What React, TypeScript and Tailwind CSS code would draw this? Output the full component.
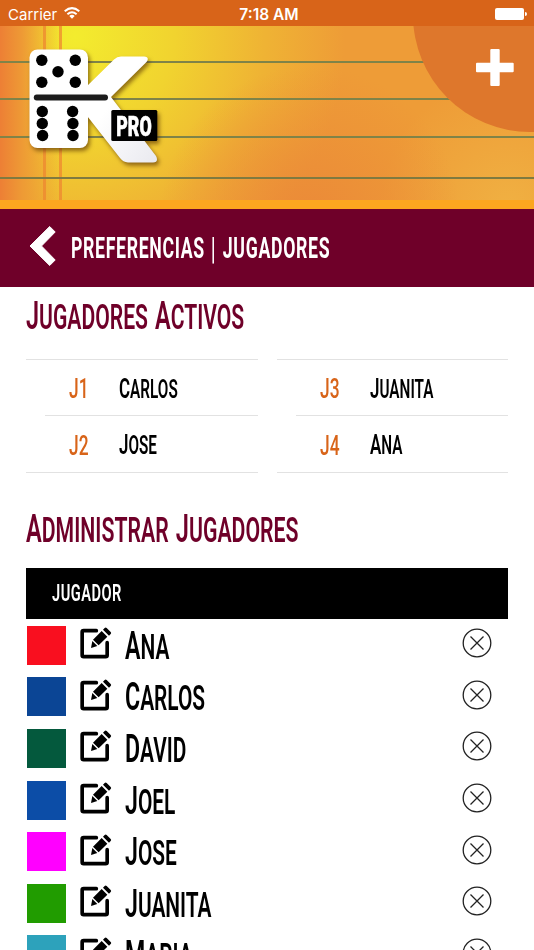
import React from 'react';

const activePlayers = [
  [
    { slot: 'J1', name: 'Carlos' },
    { slot: 'J2', name: 'Jose' },
  ],
  [
    { slot: 'J3', name: 'Juanita' },
    { slot: 'J4', name: 'Ana' },
  ],
];

const players = [
  { name: 'Ana', color: 'bg-[#f90f1f]' },
  { name: 'Carlos', color: 'bg-[#0b4595]' },
  { name: 'David', color: 'bg-[#04593d]' },
  { name: 'Joel', color: 'bg-[#0c4da7]' },
  { name: 'Jose', color: 'bg-[#ff00ff]' },
  { name: 'Juanita', color: 'bg-[#219c00]' },
  { name: 'Maria', color: 'bg-[#2da2bb]' },
];

function Logo() {
  return (
    <svg
      className="absolute left-[26px] top-[20px] drop-shadow-[2px_3px_2px_rgba(80,40,0,0.6)]"
      width="136"
      height="122"
      viewBox="0 0 136 122"
    >
      <defs>
        <linearGradient id="leg" x1="0" y1="0" x2="1" y2="1">
          <stop offset="0.4" stopColor="#fff" />
          <stop offset="1" stopColor="#e9e9ef" />
        </linearGradient>
      </defs>
      <path
        d="M58 43 L88 13.500 Q91 10.500 95 10.500 H118 Q124 11 120.500 16 L85 51 L130 110 Q133 116 127 116.500 H102 Q97 116 94 112 L58 66 Z"
        fill="url(#leg)"
      />
      <rect x="3.500" y="3.500" width="58.500" height="98.500" rx="8" fill="#fff" />
      <g fill="#000">
        <circle cx="15.800" cy="14.300" r="5.700" />
        <circle cx="49.300" cy="14.300" r="5.700" />
        <circle cx="32" cy="25.700" r="5.700" />
        <circle cx="15.800" cy="36.200" r="5.700" />
        <circle cx="49.300" cy="36.200" r="5.700" />
        <circle cx="16.300" cy="65.500" r="5.700" />
        <circle cx="16.300" cy="77.500" r="5.700" />
        <circle cx="16.600" cy="89.500" r="5.700" />
        <circle cx="46.600" cy="65.500" r="5.700" />
        <circle cx="46.900" cy="77.500" r="5.700" />
        <circle cx="47" cy="89.500" r="5.700" />
      </g>
      <rect x="7.800" y="48.600" width="74.200" height="5.800" rx="2.900" fill="#1c1c1c" />
      <rect x="85.300" y="64" width="46" height="31" rx="1.500" fill="#000" />
      <text
        transform="translate(90.300 89.700) scale(.58 1)"
        fontSize="28.500"
        fontWeight="900"
        fill="#fff"
        stroke="#fff"
        strokeWidth=".6"
        textLength="61"
        lengthAdjust="spacingAndGlyphs"
        className="font-[Roboto,sans-serif]"
      >
        PRO
      </text>
    </svg>
  );
}

function EditIcon() {
  return (
    <svg width="32" height="32" viewBox="0 0 96 96">
      <path
        d="M49 11 H11 Q6.500 11 6.500 15 V85 Q6.500 89 11 89 H77 Q81.500 89 81.500 85 V47"
        fill="none"
        stroke="#000"
        strokeWidth="11"
        strokeLinecap="round"
      />
      <path d="M65 12 L82 29 L56 55 L39 38 Z M69 8 L74 3 Q77 0 80 3 L92 15 Q95 18 92 21 L87 26 Z M37 42 L52 57 L33 63 Z" />
    </svg>
  );
}

function RemoveIcon() {
  return (
    <svg width="30" height="30" viewBox="0 0 30 30" fill="none" stroke="#222" strokeWidth="1.300">
      <circle cx="15" cy="15" r="13.800" />
      <path d="M8.500 8.500 L21.500 21.500 M21.500 8.500 L8.500 21.500" />
    </svg>
  );
}

// Small caps, with the initial of every word slightly taller
function Caps({ text }: { text: string }) {
  return (
    <>
      {text.split(' ').map((word, i) => (
        <React.Fragment key={word}>
          {i > 0 && ' '}
          <span className="inline-block uppercase first-letter:text-[1.11em]">{word}</span>
        </React.Fragment>
      ))}
    </>
  );
}

function StatusBar() {
  return (
    <div className="flex h-[26px] items-center justify-between bg-[#d86419] pl-2 pr-[7px] font-[Inter,sans-serif] text-white">
      <div className="flex w-40 items-center gap-[7px]">
        <span className="pt-[3px] text-[15px] font-normal leading-6">Carrier</span>
        <svg width="16" height="12" viewBox="0 0 16 12" fill="none" stroke="#fff" strokeWidth="2">
          <path d="M.7 4.200 Q8 -2 15.300 4.200 M3.400 7.200 Q8 3.200 12.600 7.200" />
          <path d="M5.300 8.900 Q8 6.800 10.700 8.900 L8 11.800 Z" fill="#fff" stroke="none" />
        </svg>
      </div>
      <span className="pl-[3px] pt-[3px] text-[15.500px] font-semibold leading-6">7:18 AM</span>
      <div className="flex w-40 items-center justify-end gap-px pt-0.5">
        <span className="h-[12px] w-[29px] rounded-[2px] bg-white" />
        <span className="h-1 w-[2px] rounded-r bg-white" />
      </div>
    </div>
  );
}

function Banner() {
  return (
    <header className="relative h-[183px] overflow-hidden border-b-[9px] border-[#fca61f] bg-[radial-gradient(circle_at_310px_190px,#eb8a38_0,transparent_150px),radial-gradient(circle_at_510px_180px,#f0b042_0,transparent_130px),linear-gradient(90deg,#ed7f35_0,#ee9a35_22px,transparent_62px),radial-gradient(circle_at_75px_10px,#f3ec2e_0,#f1d32f_100px,#efb334_190px,#ee9c37_270px)]">
      <div className="absolute left-[43px] top-0 h-full w-[3px] bg-[#ee8530]/70" />
      <div className="absolute left-[59px] top-0 h-full w-[3px] bg-[#ee8530]/70" />
      <div className="absolute inset-x-0 top-[35px] h-[2px] bg-[#7f8348]" />
      <div className="absolute inset-x-0 top-[72px] h-[2px] bg-[#7f8348]" />
      <div className="absolute inset-x-0 top-[110px] h-[2px] bg-[#7f8348]" />
      <div className="absolute inset-x-0 top-[151px] h-[2px] bg-[#7f7a40]" />
      <Logo />
      <div className="absolute left-[413px] top-[-128px] size-[234px] rounded-full bg-[#de772c]" />
      <button className="absolute left-[476px] top-[23px] size-[38px]">
        <svg width="38" height="38" viewBox="0 0 38 38" fill="#fff">
          <rect x="14.300" y="0" width="9.400" height="37" rx="1" />
          <rect x="0" y="13.800" width="37.700" height="9.400" rx="1" />
        </svg>
      </button>
    </header>
  );
}

export default function App() {
  return (
    <div className="h-[950px] w-[534px] overflow-hidden bg-white font-[Roboto,sans-serif] font-semibold text-black">
      <StatusBar />
      <Banner />

      <nav className="flex h-[77.500px] items-center bg-[#6f0029] pl-[29px] text-white">
        <svg width="27" height="40" viewBox="0 0 27 40" className="-mt-1">
          <path d="M20.700 .5 L26.200 6 L12.500 20 L26.200 34 L20.700 39.500 L1 20 Z" fill="#fff" stroke="#fff" strokeLinejoin="round" />
        </svg>
        <h1 className="ml-[15px] flex origin-left scale-x-[0.61] items-center whitespace-nowrap pt-px text-[29px] font-bold uppercase leading-8 tracking-[1.1px]">
          <span>Preferencias</span>
          <span className="ml-[10px] mr-[11px] inline-block scale-y-110 font-bold">|</span>
          <span>Jugadores</span>
        </h1>
      </nav>

      <main className="px-[26px]">
        <h2 className="h-[72px] origin-left scale-x-[0.612] whitespace-nowrap pt-[9px] text-[34.500px] leading-10 text-[#6f0029] [word-spacing:3px]">
          <Caps text="Jugadores Activos" />
        </h2>

        <div className="grid grid-cols-2 gap-[19px]">
          {activePlayers.map((column, i) => (
            <div key={i} className="border-y border-[#e2e2e2]">
              {column.map((player, j) => (
                <div key={player.slot} className="flex h-[56px] items-center">
                  <div
                    className={
                      j === 0
                        ? 'ml-[19px] flex h-full flex-1 items-center border-b border-[#e2e2e2] pl-6 pt-1'
                        : 'ml-[19px] flex h-full flex-1 items-center pl-6 pt-1'
                    }
                  >
                    <span className="w-[50px] origin-left scale-x-[0.62] whitespace-nowrap text-[28px] font-medium text-[#d86419]">
                      {player.slot}
                    </span>
                    <span className="origin-left scale-x-[0.6] whitespace-nowrap text-[25.500px]">
                      <Caps text={player.name} />
                    </span>
                  </div>
                </div>
              ))}
            </div>
          ))}
        </div>

        <h2 className="h-[95px] origin-left scale-x-[0.616] whitespace-nowrap pt-[36px] text-[34.500px] leading-10 text-[#6f0029] [word-spacing:3px]">
          <Caps text="Administrar Jugadores" />
        </h2>

        <div className="flex h-[51.500px] items-center bg-black pl-[26px] text-white">
          <span className="origin-left scale-x-[0.61] text-[24px] uppercase tracking-[0.8px]">Jugador</span>
        </div>

        <ul className="pt-[0.500px]">
          {players.map((player) => (
            <li key={player.name} className="flex h-[51.600px] items-center pl-px pr-4">
              <span className={`size-[39px] shrink-0 ${player.color}`} />
              <button className="-mt-1 ml-[14px]">
                <EditIcon />
              </button>
              <span className="ml-[13px] flex-1 origin-left whitespace-nowrap pt-0.5 text-[34.500px] leading-10">
                <span className="inline-block origin-left scale-x-[0.605]">
                  <Caps text={player.name} />
                </span>
              </span>
              <button className="-mt-1">
                <RemoveIcon />
              </button>
            </li>
          ))}
        </ul>
      </main>
    </div>
  );
}
